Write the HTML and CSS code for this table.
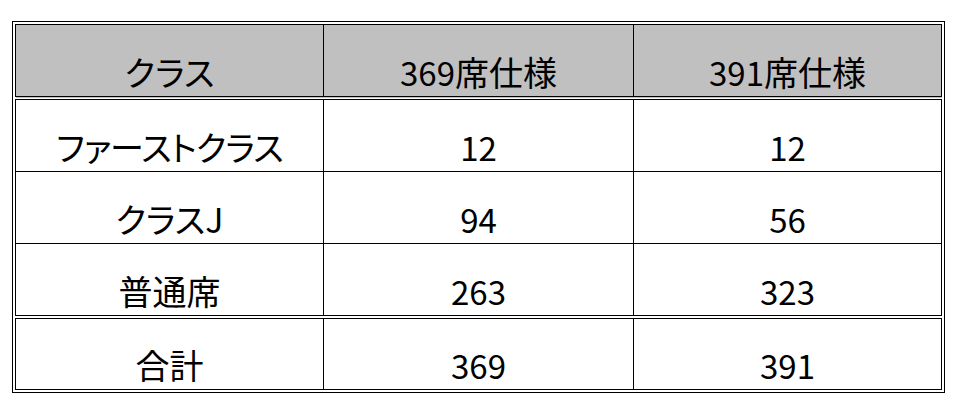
FILE: index.html
```html
<!DOCTYPE html>
<html lang="ja">
<head>
<meta charset="utf-8">
<link rel="stylesheet" href="styles.css">
</head>
<body>
<div class="frame">
  <table class="seats">
    <colgroup>
      <col class="c1"><col class="c2"><col class="c3">
    </colgroup>
    <thead>
      <tr class="head"><th>クラス</th><th><span class="digits">369</span>席仕様</th><th><span class="digits">391</span>席仕様</th></tr>
    </thead>
    <tbody>
      <tr class="row"><td class="kana">ファーストクラス</td><td class="num">12</td><td class="num">12</td></tr>
      <tr class="row"><td>クラスJ</td><td class="num">94</td><td class="num">56</td></tr>
      <tr class="row last"><td>普通席</td><td class="num">263</td><td class="num">323</td></tr>
    </tbody>
    <tfoot>
      <tr class="total"><td>合計</td><td class="num">369</td><td class="num">391</td></tr>
    </tfoot>
  </table>
</div>
</body>
</html>
```

FILE: styles.css
```css
html, body {
  margin: 0;
  padding: 0;
  background: #fff;
}
body {
  font-family: "Noto Sans CJK JP", sans-serif;
  font-feature-settings: "palt";
  color: #000;
}
.frame {
  margin: 21px 0 0 12px;
  width: 933px;
  box-sizing: border-box;
  border: 1px solid #000;
  padding: 2px;
}
.seats {
  width: 927px;
  table-layout: fixed;
  border-collapse: collapse;
  border: 1px solid #000;
}
.c1 { width: 308px; }
.c2 { width: 310px; }
.c3 { width: 308px; }
.seats th,
.seats td {
  border: 1px solid #000;
  padding: 0 0 8px;
  text-align: center;
  vertical-align: bottom;
  font-size: 34px;
  font-weight: normal;
  line-height: 32px;
}
.seats td.kana {
  letter-spacing: -1px;
}
.head th {
  background: #c0c0c0;
  height: 63px;
  border-bottom: 4px double #000;
}
.row td {
  height: 63px;
}
.row.last td {
  border-bottom: 4px double #000;
}
.total td {
  height: 62px;
}
.digits,
.seats td.num {
  font-family: "Liberation Sans Narrow", "Noto Sans CJK JP", sans-serif;
  font-size: 33px;
}
```
